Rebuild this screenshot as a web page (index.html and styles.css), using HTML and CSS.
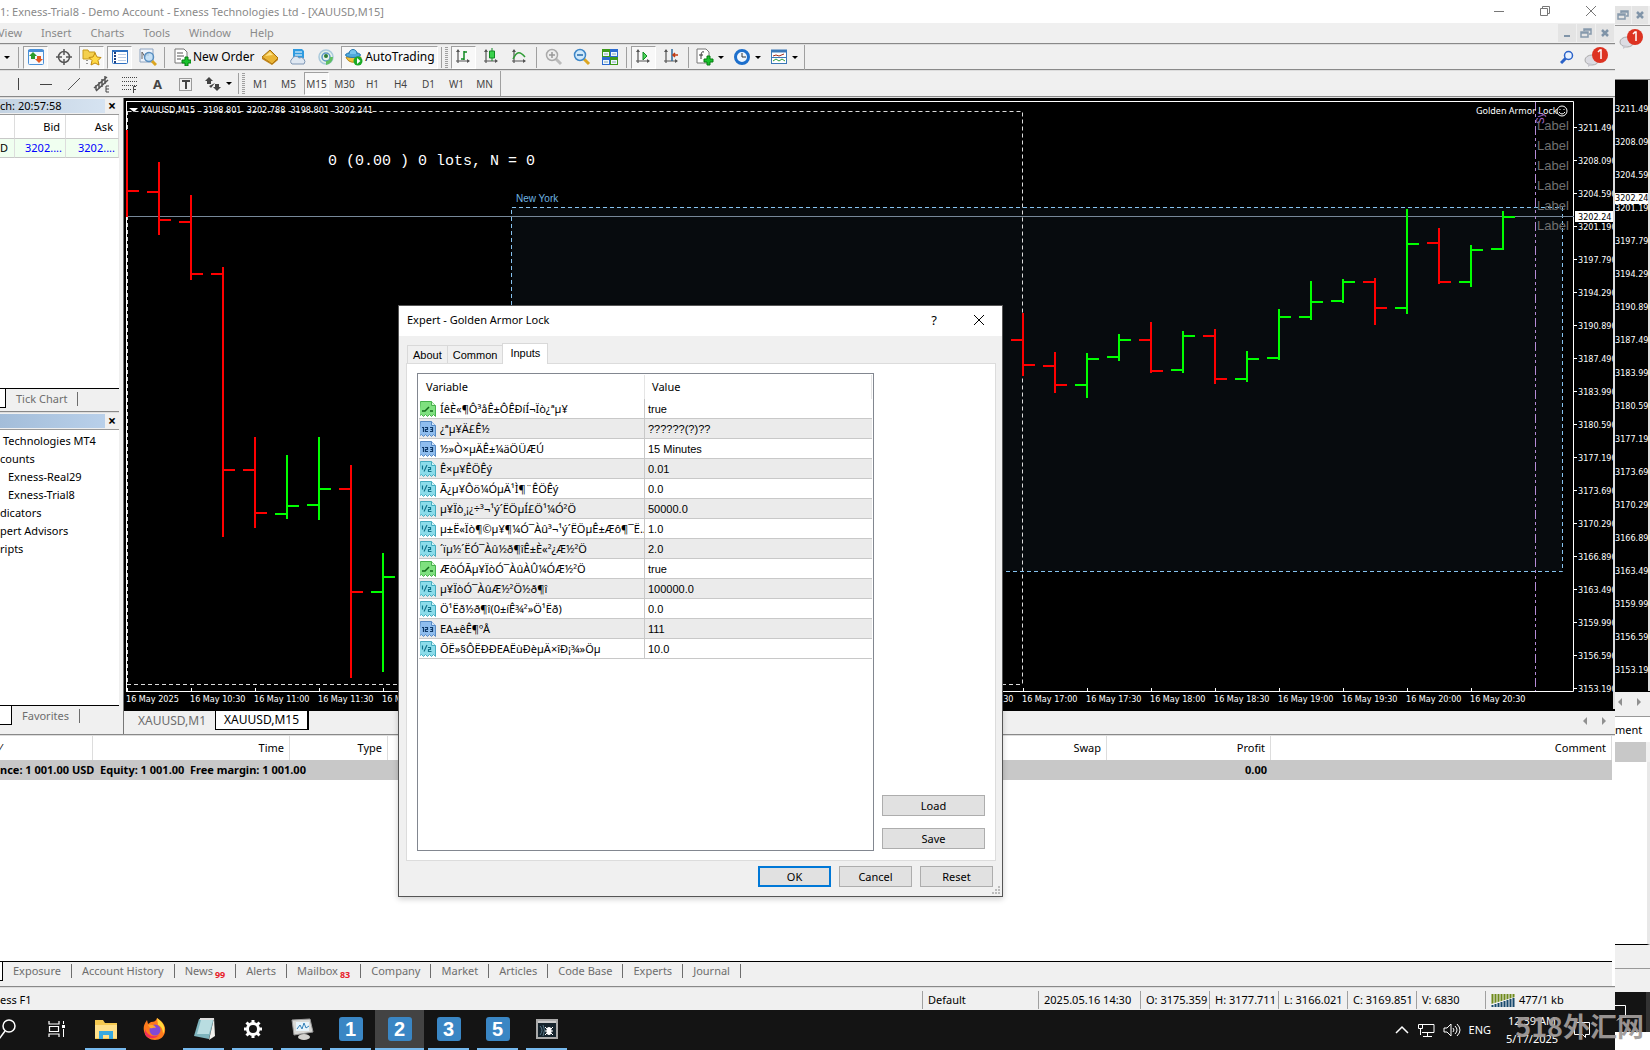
FILE: index.html
```html
<!DOCTYPE html>
<html lang="en">
<head>
<meta charset="utf-8">
<title>Exness-Trial8 - Demo Account - [XAUUSD,M15]</title>
<link rel="stylesheet" href="styles.css">
</head>
<body>
<svg class="defs" aria-hidden="true">
  <symbol id="i-bool" viewBox="0 0 16 16"><path d="M.5.5h11l4 4v11l-2-2-2 2-2-2-2 2-2-2-2 2-2-2-3 2z" fill="#7fe07f" stroke="#46b04c"/><path d="M11.500.5v4h4" fill="#d7f7d2" stroke="#46b04c"/><path d="M2 10h3l4-4M10 10h3" stroke="#12691b" stroke-width="1.500" fill="none"/></symbol>
  <symbol id="i-int" viewBox="0 0 16 16"><path d="M.5.5h11l4 4v11l-2-2-2 2-2-2-2 2-2-2-2 2-2-2-3 2z" fill="#8fbdee" stroke="#5589c4"/><path d="M11.500.5v4h4" fill="#d5e7fb" stroke="#5589c4"/><path d="M2 6.500h1.500V11M5 6.500h2.500v2h-2v2h2.500M10 6.500h2.500v4H10M10.500 8.500h2" stroke="#0f3968" stroke-width="1.200" fill="none"/></symbol>
  <symbol id="i-dbl" viewBox="0 0 16 16"><path d="M.5.5h11l4 4v11l-2-2-2 2-2-2-2 2-2-2-2 2-2-2-3 2z" fill="#8bdcea" stroke="#45acc0"/><path d="M11.500.5v4h4" fill="#d4f4f8" stroke="#45acc0"/><path d="M2.500 4.500v4M7 4l-3 6.500M8 6.500h2.500v2h-2v2h3" stroke="#11728a" stroke-width="1.200" fill="none"/></symbol>
  <symbol id="i-axes" viewBox="0 0 16 16"><path d="M3 2v13M1 13h13" stroke="#555" stroke-width="1.200"/><path d="M1 4l2-3 2 3zM12 11l3 2-3 2z" fill="#555"/></symbol>
  <symbol id="i-chat" viewBox="0 0 26 22"><ellipse cx="8" cy="14" rx="7" ry="5" fill="#dcdce2" stroke="#aaa"/><path d="M4 17v4l5-3" fill="#c8c8cf"/><circle cx="16" cy="9" r="8" fill="#dd3322"/><path d="M14 6l2-2h1v9" stroke="#fff" stroke-width="1.500" fill="none"/></symbol>
  <symbol id="i-restore" viewBox="0 0 12 12"><path d="M4 4V2h7v5H9M1 5h7v5H1zM1 6h7M4 3h7" fill="none" stroke="#8699ac" stroke-width="1.500"/></symbol>
  <symbol id="i-close" viewBox="0 0 12 12"><path d="M3 3l6 6M9 3l-6 6" stroke="#8094a8" stroke-width="2.500"/></symbol>
  <symbol id="i-arrows" viewBox="0 0 30 10"><path d="M7 1v8L3 5zM22 1v8l4-4z" fill="#909090"/></symbol>
</svg>
<div class="desktop">
  <div class="column">
    <main class="window">
      <header class="titlebar">
        <span>1: Exness-Trial8 - Demo Account - Exness Technologies Ltd - [XAUUSD,M15]</span>
        <div class="caption-buttons">
          <button aria-label="Minimize"><svg width="12" height="12"><path d="M1 6.500h10" stroke="#777"/></svg></button>
          <button aria-label="Restore"><svg width="12" height="12"><path d="M3.500 3V1.500h7v7H9M1.500 3.500h7v7h-7z" fill="none" stroke="#777"/></svg></button>
          <button aria-label="Close"><svg width="12" height="12"><path d="M1 1l10 10M11 1L1 11" stroke="#777"/></svg></button>
        </div>
      </header>
      <nav class="menubar">
        <div class="menus"><button>View</button><button>Insert</button><button>Charts</button><button>Tools</button><button>Window</button><button>Help</button></div>
        <div class="mdi-buttons">
          <button aria-label="Minimize chart"><svg width="12" height="12"><path d="M3 9h6" stroke="#8094a8" stroke-width="2"/></svg></button>
          <button aria-label="Restore chart"><svg width="12" height="12"><use href="#i-restore"/></svg></button>
          <button aria-label="Close chart"><svg width="12" height="12"><use href="#i-close"/></svg></button>
        </div>
      </nav>
      <div class="toolbar">
        <i class="caret first"></i><i class="sep"></i>
        <button class="tool on" aria-label="Market Watch"><svg width="18" height="18"><rect x="1.500" y="1.500" width="15" height="15" rx="1" fill="#f4f9ff" stroke="#4a90d8"/><path d="M1 3h16" stroke="#4a90d8" stroke-width="2"/><path d="M6 4l4 4H8v3H4V8H2z" fill="#2c9d2c"/><path d="M12 15l-4-4h2V8h4v3h2z" fill="#e25822"/></svg></button>
        <button class="tool" aria-label="Data Window"><svg width="18" height="18"><circle cx="9" cy="9" r="5.500" fill="none" stroke="#555" stroke-width="1.500"/><path d="M9 1v6M9 11v6M1 9h6M11 9h6" stroke="#555" stroke-width="1.500"/></svg></button>
        <button class="tool on" aria-label="Navigator"><svg width="20" height="18"><path d="M1 2h5l1 2h6v7H1z" fill="#f4d04e" stroke="#c79b1d"/><path d="M13 5l2 4 4 .5-3 3 1 4.500-4-2-4 2 1-4.500-3-3 4-.5z" fill="#ffd944" stroke="#c08a10"/><path d="M5 12v6" stroke="#333" stroke-dasharray="1 2"/></svg></button>
        <button class="tool on" aria-label="Terminal"><svg width="18" height="18"><rect x="1.500" y="2.500" width="15" height="13" rx="1" fill="#fff" stroke="#2c6fc0"/><path d="M1 3h16" stroke="#2c6fc0" stroke-width="2"/><path d="M4 4v11" stroke="#1b3f80" stroke-width="2" stroke-dasharray="2 1"/><path d="M7 6.500h8M7 9.500h8M7 12.500h8" stroke="#b9cce6"/></svg></button>
        <button class="tool" aria-label="Strategy Tester"><svg width="18" height="18"><path d="M1 1h13v13H1z" fill="#eef3fa" stroke="#8ea4c0"/><path d="M3 11V4l3 5 3-5v4" fill="none" stroke="#666"/><circle cx="10" cy="9" r="4.500" fill="#bcdcf5" fill-opacity=".8" stroke="#5a8fc0" stroke-width="1.500"/><path d="M13 13l4 4" stroke="#dba520" stroke-width="3"/></svg></button>
        <i class="sep"></i>
        <button class="tool wide"><svg width="18" height="18"><path d="M2 1h9l3 3v11H2z" fill="#fff" stroke="#777"/><path d="M4 5h6M4 8h7M4 11h4" stroke="#555"/><path d="M9 12h3V9h3v3h3v3h-3v3h-3v-3H9z" fill="#19c22c" stroke="#077d13"/></svg>New Order</button>
        <button class="tool" aria-label="MetaEditor"><svg width="18" height="18"><path d="M1 9l8-7 8 8-6 6z" fill="#eab535" stroke="#a46f0c"/><path d="M1 9l10 7 6-6v2l-6 5L1 11z" fill="#c18317"/><path d="M4 8l5-4 3 3z" fill="#ffe387"/></svg></button>
        <button class="tool" aria-label="Hosting"><svg width="18" height="18"><path d="M4 1h9l2 2v7H4z" fill="#2f9be0"/><path d="M6 4h7M6 7h7" stroke="#fff"/><path d="M3 16a3 3 0 010-5 4 4 0 017-1 4 4 0 015 6z" fill="#dfe8f2" stroke="#7f97b5"/></svg></button>
        <button class="tool" aria-label="Signals"><svg width="18" height="18"><circle cx="9" cy="9" r="7" fill="#e4f2e8" stroke="#a9c9dc" stroke-width="1.500"/><circle cx="9" cy="9" r="4" fill="none" stroke="#5e97c8" stroke-width="1.500"/><path d="M9 8v9a8 8 0 007-8l-3 0a4 4 0 01-4 4z" fill="#5fbf62"/><circle cx="9" cy="8" r="2" fill="#2c7d36"/></svg></button>
        <button class="tool auto on"><svg width="18" height="18"><path d="M1 9c2 7 13 7 15 0z" fill="#f0c23c" stroke="#b88616"/><ellipse cx="8" cy="7" rx="7.500" ry="2.500" fill="#4fa9dc" stroke="#2678b0"/><path d="M4 6c0-6 8-6 8 0" fill="#76c4ee" stroke="#2678b0"/><circle cx="13" cy="13" r="4.500" fill="#1aaa26"/><path d="M12 10l3.500 3-3.500 3z" fill="#fff"/></svg>AutoTrading</button>
        <i class="grip"></i>
        <button class="tool on" aria-label="Bar Chart"><svg width="18" height="18"><use href="#i-axes" width="16" height="16"/><path d="M9 3v9M9 4h3M6 11h3" stroke="#118a22" stroke-width="1.500"/></svg></button>
        <button class="tool" aria-label="Candlesticks"><svg width="18" height="18"><use href="#i-axes" width="16" height="16"/><path d="M9 0v13" stroke="#118a22"/><path d="M6.500 3h5v7h-5z" fill="#3ad24c" stroke="#118a22"/></svg></button>
        <button class="tool" aria-label="Line Chart"><svg width="18" height="18"><use href="#i-axes" width="16" height="16"/><path d="M2 11c4-8 7-8 12-2" stroke="#2f9c36" stroke-width="1.500" fill="none"/></svg></button>
        <i class="sep"></i>
        <button class="tool" aria-label="Zoom In"><svg width="18" height="18"><path d="M11 11l5 5" stroke="#bbb" stroke-width="3"/><circle cx="7" cy="7" r="5.500" fill="#eee" stroke="#aaa" stroke-width="1.500"/><path d="M4 7h6M7 4v6" stroke="#999" stroke-width="1.500"/></svg></button>
        <button class="tool" aria-label="Zoom Out"><svg width="18" height="18"><path d="M11 11l5 5" stroke="#dca621" stroke-width="3"/><circle cx="7" cy="7" r="5.500" fill="#cfe9fb" stroke="#3d86c8" stroke-width="1.500"/><path d="M4 7h6" stroke="#2568a8" stroke-width="1.500"/></svg></button>
        <button class="tool" aria-label="Tile Windows"><svg width="18" height="18"><path d="M1 1h8v8H1zM9 9h8v8H9z" fill="#3d9a1c"/><path d="M9 1h8v8H9zM1 9h8v8H1z" fill="#2b6bd0"/><path d="M2 4h6v4H2zM10 4h6v4h-6zM2 12h6v4H2zM10 12h6v4h-6z" fill="#eef6ff"/><path d="M3 6h4M11 6h4M3 14h4M11 14h4" stroke="#8aa"/></svg></button>
        <i class="sep"></i>
        <button class="tool on" aria-label="Auto Scroll"><svg width="18" height="18"><use href="#i-axes" width="16" height="16"/><path d="M8 4l4 4-4 4z" fill="#4bd65a" stroke="#118a22"/></svg></button>
        <button class="tool" aria-label="Chart Shift"><svg width="18" height="18"><use href="#i-axes" width="16" height="16"/><path d="M9 1v12" stroke="#2c6a9c" stroke-width="1.500"/><path d="M15 7h-5M12 5l-2 2 2 2" stroke="#c03a12" stroke-width="1.500" fill="none"/></svg></button>
        <i class="sep"></i>
        <button class="tool drop" aria-label="Indicators"><svg width="18" height="18"><path d="M1 1h9l3 3v11H1z" fill="#fff" stroke="#777"/><path d="M8 4c-3-1-3 2-3 7M3 7h4" stroke="#333" fill="none"/><path d="M8 11h3V8h3v3h3v3h-3v3h-3v-3H8z" fill="#19c22c" stroke="#077d13"/></svg><i class="caret"></i></button>
        <button class="tool drop" aria-label="Periodicity"><svg width="18" height="18"><circle cx="9" cy="9" r="6.500" fill="#eef6ff" stroke="#1d6fcc" stroke-width="3"/><path d="M9 5v4h4" stroke="#333" fill="none"/></svg><i class="caret"></i></button>
        <button class="tool drop" aria-label="Templates"><svg width="18" height="18"><rect x="1.500" y="2.500" width="15" height="13" fill="#fff" stroke="#3a78b8"/><path d="M1 3h16" stroke="#3a78b8" stroke-width="3"/><path d="M3 8l3-1 3 1 5-2" stroke="#a02c1c" fill="none"/><path d="M3 13l3-2 3 2 3-2 3 2" stroke="#2f9c36" fill="none"/><path d="M2 9.500h14" stroke="#3a78b8"/></svg><i class="caret"></i></button>
        <i class="edge"></i>
        <div class="right-tools"><svg width="14" height="14"><path d="M1 13l5-5" stroke="#2b62c8" stroke-width="3"/><circle cx="8.500" cy="5.500" r="4" fill="#e8f2ff" stroke="#2b62c8" stroke-width="1.500"/></svg><svg width="26" height="22"><use href="#i-chat"/></svg></div>
      </div>
      <div class="toolbar second">
        <button class="tool" aria-label="Vertical Line"><svg width="18" height="18"><path d="M9.500 3v12" stroke="#444"/></svg></button>
        <button class="tool" aria-label="Horizontal Line"><svg width="18" height="18"><path d="M3 9.500h12" stroke="#444"/></svg></button>
        <button class="tool" aria-label="Trendline"><svg width="18" height="18"><path d="M3 15L15 3" stroke="#555"/></svg></button>
        <button class="tool" aria-label="Channel"><svg width="18" height="18"><path d="M1 13L14 2M3 16L15 5M3 10v5M6 7v7M9 4v8M12 1v8" stroke="#555" stroke-width="1.500"/><path d="M16 11h-3v6h3M13 14h3" fill="none" stroke="#444"/></svg></button>
        <button class="tool" aria-label="Fibonacci"><svg width="18" height="18"><path d="M1 2.500h15M1 6.500h15M1 10.500h15M1 14.500h9" stroke="#444" stroke-dasharray="1 1"/><path d="M15 11.500h-2.500V18M12 14.500h3" fill="none" stroke="#444"/></svg></button>
        <button class="tool glyph">A</button>
        <button class="tool" aria-label="Text Label"><svg width="18" height="18"><path d="M2.500 3.500h12v12h-12z" fill="none" stroke="#444" stroke-dasharray="1 1"/><path d="M5 6h8M9 6v8" stroke="#444" stroke-width="2"/></svg></button>
        <button class="tool drop" aria-label="Arrows"><svg width="18" height="18"><path d="M5 2l4 4H7v3H3V6H1zM13 16l-4-4h2V9h4v3h2zM5 11l2 2 4-5" fill="#444"/></svg><i class="caret"></i></button>
        <i class="grip"></i>
        <button class="tool">M1</button><button class="tool">M5</button><button class="tool on">M15</button><button class="tool">M30</button><button class="tool">H1</button><button class="tool">H4</button><button class="tool">D1</button><button class="tool">W1</button><button class="tool">MN</button>
        <i class="edge"></i>
      </div>
      <div class="work">
        <aside class="side">
          <section class="panel watch">
            <h2 class="cap pale"><span>ch: 20:57:58</span><button aria-label="Close Market Watch">×</button></h2>
            <table class="quotes">
              <thead><tr><th></th><th>Bid</th><th>Ask</th></tr></thead>
              <tbody><tr><td>D</td><td>3202....</td><td>3202....</td></tr></tbody>
            </table>
            <div class="grow"></div>
            <div class="tabs"><i class="tab-cut"></i><button>Tick Chart</button></div>
          </section>
          <section class="panel nav">
            <h2 class="cap"><span></span><button aria-label="Close Navigator">×</button></h2>
            <ul class="tree"><li class="in">Technologies MT4</li><li>counts</li><li class="deep">Exness-Real29</li><li class="deep">Exness-Trial8</li><li>dicators</li><li>pert Advisors</li><li>ripts</li></ul>
            <div class="tabs wide-cut"><i class="tab-cut"></i><button>Favorites</button></div>
          </section>
        </aside>
        <section class="charts">
          <svg class="chart" role="img" aria-label="XAUUSD M15 bar chart">
            <g transform="translate(-124,-98)">
              <rect x="511" y="207" width="1051" height="364" fill="#070b0e"/>
              <path d="M126 101.500H1573.500V691.500H126M126.500 101v591" fill="none" stroke="#fff"/>
              <path d="M127.500 111.500H1022.500V684M127 684.500H1022M127.500 111v573" fill="none" stroke="#ddd" stroke-dasharray="4 3"/>
              <path d="M511.500 571V207.500H1562.500V571.500H511" fill="none" stroke="#87c3f0" stroke-dasharray="4 3"/>
              <path d="M127 216.500H1574" stroke="#778899"/>
              <path d="M1535.500 102V691" stroke="#b58bd6" stroke-dasharray="9 3 3 3 3 3"/>
              <path class="bar down" d="M127 130V217M127 191h12M159 162V235M147 192h12M159 220h12M191 195V280M179 222h12M191 274h12M223 267V537M211 274h12M223 470h12M255 437V528M243 470h12M255 513h12M351 465V678M339 489h12M351 592h12M1023 313V376M1011 340h12M1023 365h12M1055 352V393M1043 366h12M1055 385h12M1151 322V373M1139 340h12M1151 371h12M1215 329V384M1203 336h12M1215 379h12M1375 278V325M1363 282h12M1375 308h12M1439 228V284M1427 243h12M1439 282h12"/>
              <path class="bar up" d="M287 455V519M275 514h12M287 506h12M319 437V520M307 505h12M319 489h12M383 553V672M371 592h12M383 577h12M1087 353V398M1075 385h12M1087 359h12M1119 334V361M1107 357h12M1119 340h12M1183 331V373M1171 370h12M1183 336h12M1247 351V382M1235 379h12M1247 359h12M1279 309V360M1267 358h12M1279 317h12M1311 281V320M1299 317h12M1311 302h12M1343 279V303M1331 301h12M1343 282h12M1407 209V314M1395 308h12M1407 244h12M1471 245V287M1459 282h12M1471 250h12M1503 211V250M1491 249h12M1503 217h12"/>
              <path d="M1574 127.500h3M1574 160.500h3M1574 193.500h3M1574 226.500h3M1574 259.500h3M1574 292.500h3M1574 325.500h3M1574 358.500h3M1574 391.500h3M1574 424.500h3M1574 457.500h3M1574 490.500h3M1574 523.500h3M1574 556.500h3M1574 589.500h3M1574 622.500h3M1574 655.500h3M1574 688.500h3M127.500 688v4M191.500 688v4M255.500 688v4M319.500 688v4M383.500 688v4M1023.500 688v4M1087.500 688v4M1151.500 688v4M1215.500 688v4M1279.500 688v4M1343.500 688v4M1407.500 688v4M1471.500 688v4" stroke="#fff"/>
              <path d="M129 108h9l-4 4z" fill="#fff"/>
              <g class="axis">
                <text x="141" y="113" xml:space="preserve">XAUUSD,M15   3198.801  3202.788  3198.801  3202.241</text>
                <text x="1578" y="131">3211.490</text><text x="1578" y="164">3208.090</text><text x="1578" y="197">3204.590</text><text x="1578" y="230">3201.190</text><text x="1578" y="263">3197.790</text><text x="1578" y="296">3194.290</text><text x="1578" y="329">3190.890</text><text x="1578" y="362">3187.490</text><text x="1578" y="395">3183.990</text><text x="1578" y="428">3180.590</text><text x="1578" y="461">3177.190</text><text x="1578" y="494">3173.690</text><text x="1578" y="527">3170.290</text><text x="1578" y="560">3166.890</text><text x="1578" y="593">3163.490</text><text x="1578" y="626">3159.990</text><text x="1578" y="659">3156.590</text><text x="1578" y="692">3153.190</text>
                <text x="126" y="702">16 May 2025</text><text x="190" y="702">16 May 10:30</text><text x="254" y="702">16 May 11:00</text><text x="318" y="702">16 May 11:30</text><text x="382" y="702">16 May 12:00</text><text x="958" y="702">16 May 16:30</text><text x="1022" y="702">16 May 17:00</text><text x="1086" y="702">16 May 17:30</text><text x="1150" y="702">16 May 18:00</text><text x="1214" y="702">16 May 18:30</text><text x="1278" y="702">16 May 19:00</text><text x="1342" y="702">16 May 19:30</text><text x="1406" y="702">16 May 20:00</text><text x="1470" y="702">16 May 20:30</text>
              </g>
              <path d="M1575 211h38v11h-38z" fill="#fff"/><text class="price" x="1578" y="220">3202.24</text>
              <text class="comment" x="328" y="165">0 (0.00 ) 0 lots, N = 0</text>
              <text class="session" x="516" y="202">New York</text>
              <text class="expert" x="1476" y="114">Golden Armor Lock</text>
              <circle cx="1562" cy="111" r="5" fill="none" stroke="#fff"/><path d="M1559 112q3 4 6 0M1560 109v1M1564 109v1" fill="none" stroke="#fff"/>
              <text class="sy" transform="translate(1544,124) rotate(-90)">Sy</text>
              <g class="labels"><text x="1537" y="130">Label</text><text x="1537" y="150">Label</text><text x="1537" y="170">Label</text><text x="1537" y="190">Label</text><text x="1537" y="210">Label</text><text x="1537" y="230">Label</text></g>
            </g>
          </svg>
          <div class="chart-tabs"><button>XAUUSD,M1</button><button class="active">XAUUSD,M15</button><svg width="30" height="10"><use href="#i-arrows"/></svg></div>
        </section>
      </div>
      <section class="terminal">
        <table class="trades">
          <colgroup><col class="c-order"><col class="c-time"><col class="c-type"><col class="c-swap"><col class="c-profit"><col></colgroup>
          <thead><tr><th>⁄</th><th>Time</th><th>Type</th><th>Swap</th><th>Profit</th><th>Comment</th></tr></thead>
          <tbody><tr><td colspan="4">nce: 1 001.00 USD&nbsp; Equity: 1 001.00&nbsp; Free margin: 1 001.00</td><td>0.00</td><td></td></tr></tbody>
        </table>
        <div class="grow"></div>
        <div class="tabs bottom"><i class="tab-cut"></i><button>Exposure</button><button>Account History</button><button>News<sub>99</sub></button><button>Alerts</button><button>Mailbox<sub>83</sub></button><button>Company</button><button>Market</button><button>Articles</button><button>Code Base</button><button>Experts</button><button>Journal</button></div>
      </section>
      <footer class="status">
        <span class="help">ess F1</span><span class="s-profile">Default</span><span class="s-date">2025.05.16 14:30</span><span class="s-val">O: 3175.359</span><span class="s-val">H: 3177.711</span><span class="s-val">L: 3166.021</span><span class="s-val">C: 3169.851</span><span class="s-val">V: 6830</span>
        <span class="s-net"><svg width="24" height="13"><path d="M1.500 0v13M4.500 0v13M7.500 0v13M10.500 0v13M13.500 0v13M16.500 0v13M19.500 0v13M22.500 0v13" stroke="#6f8a1a" stroke-width="2"/><path d="M0 10L24 3V13H0z" fill="#efefef"/><path d="M1.500 11v2M4.500 10v3M7.500 9v4M10.500 8v5M13.500 7v6M16.500 6v7M19.500 5v8M22.500 4v9" stroke="#17496d" stroke-width="2"/></svg>477/1 kb</span>
      </footer>
    </main>
    <nav class="taskbar">
      <button class="task cut" aria-label="Search"><svg width="18" height="24"><circle cx="9" cy="9" r="6" fill="none" stroke="#fff" stroke-width="1.500"/><path d="M5 14l-6 8" stroke="#fff" stroke-width="1.500"/></svg></button>
      <button class="task" aria-label="Task View"><svg width="20" height="18"><path d="M2 1v3h10V1M2 17v-3h10v3M2.500 6.500h9v5h-9z" fill="none" stroke="#fff" stroke-width="1.200"/><path d="M16.500 1v3M16.500 9v8" stroke="#fff"/><path d="M15 5h3v3h-3z" fill="#fff"/></svg></button>
      <button class="task run" aria-label="File Explorer"><svg width="24" height="22"><path d="M1 2h8l2 3h12v16H1z" fill="#f5c951"/><path d="M1 7h22v13H1z" fill="#ffe08a"/><path d="M5 21v-8h14v8h-4v-4H9v4z" fill="#36a9e1"/></svg></button>
      <button class="task" aria-label="Firefox"><svg width="24" height="24"><path d="M14 1c6 4 9 8 8 14-1 5-5 8-10 8S2 20 1 14C0 9 2 6 4 3l1 4 3-2c3 0 5-1 6-4z" fill="#ff7a1c"/><path d="M14 1c7 5 9 10 6 16 0-5-2-8-5-9z" fill="#ffd93b"/><circle cx="12" cy="13" r="5.500" fill="#8149d6"/><path d="M2 12c2 6 8 9 14 6-3 4-12 5-14-1z" fill="#f32f5b"/><path d="M5 8c4-1 7 0 8 3-3-1-4 1-6 0z" fill="#ffa72d"/></svg></button>
      <button class="task run" aria-label="Notepad"><svg width="24" height="24"><path d="M7 2l15-1-5 21-15-3z" fill="#7eb4bd"/><path d="M9 3h12l-4 14H5z" fill="#b9dde1"/><path d="M22 1l1 18-6 4z" fill="#f0f0ec"/><path d="M8 2h14" stroke="#ddd" stroke-width="2"/></svg></button>
      <button class="task run" aria-label="Settings"><svg width="22" height="22"><circle cx="11" cy="11" r="5.500" fill="none" stroke="#fff" stroke-width="3"/><path d="M11 2v3M11 17v3M2 11h3M17 11h3M4.500 4.500l2 2M15.500 15.500l2 2M17.500 4.500l-2 2M6.500 15.500l-2 2" stroke="#fff" stroke-width="3"/></svg></button>
      <button class="task run" aria-label="Monitor"><svg width="24" height="24"><path d="M2 3l18-1 3 13-19 3z" fill="#d9d9d6" stroke="#999"/><path d="M6 5h13v9H6z" fill="#e8f4fb"/><path d="M7 12l3-4 2 4 2-6 2 5 3-2" fill="none" stroke="#3280b8"/><ellipse cx="14" cy="20" rx="6" ry="3" fill="#d2d2cf"/></svg></button>
      <button class="task run"><b>1</b></button>
      <button class="task run active"><b>2</b></button>
      <button class="task run"><b>3</b></button>
      <button class="task run"><b>5</b></button>
      <button class="task run" aria-label="Debugger"><svg width="22" height="20"><path d="M1 1h20v18H1z" fill="#16242d" stroke="#aaa" stroke-width="2"/><path d="M2 3h18" stroke="#ccc" stroke-width="2"/><ellipse cx="13" cy="12" rx="2.500" ry="4" fill="#fff"/><path d="M9 8l2 2M9 12h8M9 16l2-2M17 8l-2 2M17 16l-2-2" stroke="#fff"/><path d="M4 7q4 4 0 9M7 6q3 5 0 11" stroke="#578" fill="none"/></svg></button>
      <div class="tray">
        <svg width="14" height="10"><path d="M1 8l6-6 6 6" fill="none" stroke="#fff" stroke-width="1.500"/></svg>
        <svg width="18" height="16"><path d="M5 2.500h12v8H5M10.500 11v3M6 14.500h9M1.500 2.500h4v4h-4zM3.500 7v6" fill="none" stroke="#fff"/></svg>
        <svg width="18" height="16"><path d="M1 6h3l4-4v12l-4-4H1z" fill="none" stroke="#fff"/><path d="M10 6q2 2 0 4M12 4q4 4 0 8M14 2q6 6 0 12" fill="none" stroke="#fff"/></svg>
        <span>ENG</span>
        <time>12:39 AM<br>5/17/2025</time>
        <svg width="18" height="18"><path d="M1.500 1.500h15v12h-4v3l-3-3h-8z" fill="none" stroke="#fff"/></svg>
      </div>
    </nav>
  </div>
  <aside class="behind">
    <div class="b-menu"><button aria-label="Restore"><svg width="12" height="12"><use href="#i-restore"/></svg></button><button aria-label="Close"><svg width="12" height="12"><use href="#i-close"/></svg></button></div>
    <div class="b-tools"><svg width="26" height="22"><use href="#i-chat"/></svg></div>
    <ol class="b-prices"><li>3211.490</li><li>3208.090</li><li>3204.590</li><li>3201.190</li><li>3197.790</li><li>3194.290</li><li>3190.890</li><li>3187.490</li><li>3183.990</li><li>3180.590</li><li>3177.190</li><li>3173.690</li><li>3170.290</li><li>3166.890</li><li>3163.490</li><li>3159.990</li><li>3156.590</li><li>3153.190</li><li class="now">3202.24</li></ol>
    <div class="b-tabs"><svg width="30" height="10"><use href="#i-arrows"/></svg></div>
    <div class="b-head">ment</div>
    <div class="b-row"></div>
    <div class="b-space"></div>
    <div class="b-foot"></div>
    <div class="b-status"></div>
    <div class="b-task"><svg width="12" height="18"><path d="M0 1.500h10.500v12H5l-3 3" fill="none" stroke="#fff"/></svg></div>
    <div class="b-end"></div>
  </aside>
  <div class="watermark">518外汇网</div>

  <form class="dialog" role="dialog" aria-labelledby="dlg-title" onsubmit="return false">
    <header class="dlg-title"><span id="dlg-title">Expert - Golden Armor Lock</span><button type="button" aria-label="Help">?</button><button type="button" aria-label="Close"><svg width="12" height="12"><path d="M1 1l10 10M11 1L1 11" stroke="#000"/></svg></button></header>
    <div class="dlg-tabs"><button type="button">About</button><button type="button">Common</button><button type="button" class="active">Inputs</button></div>
    <div class="pane">
      <div class="list">
        <table class="inputs">
          <colgroup><col class="c-var"><col></colgroup>
          <thead><tr><th>Variable</th><th>Value</th></tr></thead>
          <tbody>
            <tr><td><svg width="16" height="16"><use href="#i-bool"/></svg>ÍêÈ«¶Ô³åÊ±ÔÊÐíÍ¬Ïò¿ªµ¥</td><td>true</td></tr>
            <tr><td><svg width="16" height="16"><use href="#i-int"/></svg>¿ªµ¥Ä£Ê½</td><td>??????(?)??</td></tr>
            <tr><td><svg width="16" height="16"><use href="#i-int"/></svg>½»Ò×µÄÊ±¼äÖÜÆÚ</td><td>15 Minutes</td></tr>
            <tr><td><svg width="16" height="16"><use href="#i-dbl"/></svg>Ê×µ¥ÊÖÊý</td><td>0.01</td></tr>
            <tr><td><svg width="16" height="16"><use href="#i-dbl"/></svg>Ã¿µ¥Ôö¼ÓµÄ¹Ì¶¨ÊÖÊý</td><td>0.0</td></tr>
            <tr><td><svg width="16" height="16"><use href="#i-dbl"/></svg>µ¥Ïò¸¡¿÷³¬¹ý´ËÖµÍ£Ö¹¼Ó²Ö</td><td>50000.0</td></tr>
            <tr><td><svg width="16" height="16"><use href="#i-dbl"/></svg>µ±Ë«Ïò¶©µ¥¶¼Ó¯Àû³¬¹ý´ËÖµÊ±Æô¶¯Ë...</td><td>1.0</td></tr>
            <tr><td><svg width="16" height="16"><use href="#i-dbl"/></svg>´ïµ½´ËÓ¯Àû½ð¶îÊ±È«²¿Æ½²Ö</td><td>2.0</td></tr>
            <tr><td><svg width="16" height="16"><use href="#i-bool"/></svg>ÆôÓÃµ¥ÏòÓ¯ÀûÀÛ¼ÓÆ½²Ö</td><td>true</td></tr>
            <tr><td><svg width="16" height="16"><use href="#i-dbl"/></svg>µ¥ÏòÓ¯ÀûÆ½²Ö½ð¶î</td><td>100000.0</td></tr>
            <tr><td><svg width="16" height="16"><use href="#i-dbl"/></svg>Ö¹Ëð½ð¶î(0±íÊ¾²»Ö¹Ëð)</td><td>0.0</td></tr>
            <tr><td><svg width="16" height="16"><use href="#i-int"/></svg>EA±êÊ¶ºÅ</td><td>111</td></tr>
            <tr><td><svg width="16" height="16"><use href="#i-dbl"/></svg>ÕË»§ÔËÐÐEAËùÐèµÄ×îÐ¡¾»Öµ</td><td>10.0</td></tr>
          </tbody>
        </table>
      </div>
      <div class="pane-actions"><button type="button" class="push">Load</button><button type="button" class="push">Save</button></div>
    </div>
    <div class="dlg-actions"><button type="submit" class="push default">OK</button><button type="button" class="push">Cancel</button><button type="reset" class="push">Reset</button></div>
    <svg class="size-grip" width="8" height="8"><path d="M6 0h2v2H6zM3 3h2v2H3zM6 3h2v2H6zM0 6h2v2H0zM3 6h2v2H3zM6 6h2v2H6z" fill="#bbb"/></svg>
  </form>
</div>
</body>
</html>
```
FILE: styles.css
```css
* { box-sizing: border-box; }
body { margin: 0; font: 11px/16px "Noto Sans", sans-serif; color: #000; background: #fff; }
button { font: inherit; color: inherit; border: 0; background: none; padding: 0; margin: 0; white-space: nowrap; }
svg { display: block; flex: none; }
table { border-collapse: separate; border-spacing: 0; table-layout: fixed; width: 100%; }
th { font-weight: 400; }
.defs { position: absolute; width: 0; height: 0; }
.grow { flex: 1; }

.desktop { position: relative; display: grid; grid-template-columns: minmax(0, 1fr) 35px; height: 100vh; overflow: hidden; }
.column { display: flex; flex-direction: column; min-height: 0; }
.window { flex: 1; min-height: 0; display: flex; flex-direction: column; background: #f0f0f0; }

/* Title bar and menu */
.titlebar { height: 23px; background: #fff; color: #8a8a8a; display: flex; justify-content: space-between; align-items: center; white-space: nowrap; }
.caption-buttons { display: flex; gap: 34px; padding: 0 18px 2px 0; }
.menubar { height: 22px; display: flex; justify-content: space-between; color: #8a8a8a; border-bottom: 2px groove #ddd; }
.menus { display: flex; gap: 19px; margin-left: -2px; }
.mdi-buttons { display: flex; gap: 1px; padding: 1px 1px 0 0; }
.mdi-buttons button, .b-menu button { width: 18px; height: 18px; background: #e4e4e4; display: grid; place-items: center; }

/* Toolbars */
.toolbar { height: 26px; flex: none; display: flex; align-items: center; gap: 3px; border-bottom: 2px groove #ddd; font-size: 12px; }
.tool { height: 23px; min-width: 25px; display: flex; align-items: center; justify-content: center; }
.tool.on { background: #f8f8f8; border: 1px solid; border-color: #a0a0a0 #fff #fff #a0a0a0; }
.tool.wide { gap: 2px; padding: 0 0 0 4px; }
.tool.auto { gap: 2px; width: 97px; }
.tool.drop { width: 34px; gap: 4px; justify-content: flex-start; padding-left: 3px; }
.caret { width: 0; height: 0; border: 3px solid transparent; border-top-color: #000; border-bottom: 0; }
.caret.first { margin: 0 4px 0 4px; }
.sep { width: 1px; height: 21px; margin: 0 1px; background: #a0a0a0; }
.grip { width: 7px; height: 21px; border-left: 1px solid #a0a0a0; background: repeating-linear-gradient(#a0a0a0 0 1px, transparent 1px 2px) 3px 0 / 3px 100% no-repeat; }
.edge { width: 1px; height: 25px; background: #a0a0a0; }
.right-tools { margin-left: auto; display: flex; align-items: center; gap: 10px; padding-right: 5px; }
.toolbar.second { height: 27px; padding-left: 5px; font-size: 10px; color: #444; }
.glyph { font-size: 13px; font-weight: 700; }

/* Left panels */
.work { flex: 1; min-height: 0; display: grid; grid-template-columns: 119px minmax(0, 1fr); column-gap: 4px; }
.side { display: flex; flex-direction: column; min-height: 0; overflow: hidden; padding-bottom: 6px; }
.panel { display: flex; flex-direction: column; background: #fff; min-height: 0; }
.watch { height: 315px; border-bottom: 2px groove #ddd; }
.nav { flex: 1; }
.cap { margin: 0; height: 17px; display: flex; align-items: center; background: #f0f0f0; border-bottom: 1px solid #999; font-size: 11px; font-weight: 400; }
.cap span { flex: 1; height: 14px; line-height: 14px; background: linear-gradient(90deg, #a3bdd9, #b9d0ea); }
.cap.pale span { background: linear-gradient(90deg, #c4d3e2, #d6e3f1); }
.cap button { width: 14px; font-size: 14px; font-weight: 700; line-height: 12px; }
.quotes th, .quotes td { text-align: right; padding: 0 5px 0 0; border-right: 1px solid #ddd; border-bottom: 1px solid #c8c8c8; white-space: nowrap; overflow: hidden; }
.quotes th { height: 24px; }
.quotes td { height: 19px; background: #f0fff0; color: #00f; padding-right: 3px; }
.quotes th:first-child { width: 15px; }
.quotes td:first-child { color: #000; padding: 0; text-align: left; }
.quotes th:nth-child(2) { width: 51px; }
.tabs { height: 23px; flex: none; display: flex; align-items: flex-start; background: #f0f0f0; border-top: 1px solid #000; color: #6d6d6d; overflow: hidden; }
.tabs button { height: 14px; margin-top: 3px; padding: 0 10px; line-height: 14px; border-right: 1px solid #6d6d6d; }
.tab-cut { width: 6px; height: 20px; margin-top: -1px; background: #fff; border: solid #000; border-width: 0 1px 1px 0; }
.wide-cut .tab-cut { width: 12px; }
.bottom .tab-cut { width: 3px; }
.tabs sub { color: #e8202a; font-size: 9px; font-weight: 700; line-height: 0; margin-left: 2px; }
.tree { list-style: none; margin: 0; padding: 2px 0 0; flex: 1; }
.tree li { height: 18px; line-height: 18px; white-space: nowrap; }
.tree .in { padding-left: 3px; }
.tree .deep { padding-left: 8px; }

/* Chart */
.charts { display: flex; flex-direction: column; min-height: 0; min-width: 0; border-left: 1px solid #777; }
.chart { flex: 1; width: 100%; min-height: 0; background: #000; border-right: 2px solid #ddd; }
.bar { fill: none; stroke-width: 2; }
.down { stroke: #f00; }
.up { stroke: #0f0; }
.axis, .price { font: 9px "DejaVu Sans Condensed", "DejaVu Sans", sans-serif; fill: #fff; }
.price { fill: #000; }
.comment { font: 15px "Liberation Mono", monospace; fill: #fff; }
.session { font: 10px "Liberation Sans", sans-serif; fill: #6fb4e0; }
.expert { font: 9px "Noto Sans", sans-serif; fill: #fff; }
.sy { font: 10px "Liberation Sans", sans-serif; fill: #a66bd0; }
.labels { font: 13px "Liberation Sans", sans-serif; fill: #707070; }
.chart-tabs { height: 25px; flex: none; display: flex; align-items: flex-start; border-top: 2px solid #000; color: #6d6d6d; font-size: 12px; }
.chart-tabs button { height: 19px; padding: 0 9px 0 14px; }
.chart-tabs .active { background: #fff; color: #000; border: solid #000; border-width: 0 2px 1px 1px; padding: 0 8px; }
.chart-tabs svg { margin: 5px 5px 0 auto; }

/* Terminal */
.terminal { height: 254px; flex: none; display: flex; flex-direction: column; background: #fff; border-top: 2px groove #ddd; border-bottom: 2px groove #ddd; padding-right: 3px; }
.trades th { height: 24px; text-align: right; padding: 0 5px; border-right: 1px solid #ddd; }
.trades th:first-child { text-align: left; padding: 0; }
.trades td { height: 20px; background: #c8c8c8; font-weight: 700; text-align: right; padding: 0 4px; }
.trades td:first-child { text-align: left; padding: 0; white-space: pre; }
.c-order { width: 93px; } .c-time { width: 197px; } .c-type { width: 98px; } .c-swap { width: 719px; } .c-profit { width: 164px; }
.tabs.bottom { height: 25px; }
.tabs.bottom button { margin-top: 2px; }
.status { height: 22px; flex: none; display: flex; align-items: flex-end; padding-bottom: 1px; white-space: nowrap; }
.status span { height: 18px; line-height: 18px; padding-left: 5px; border-left: 1px solid #a0a0a0; }
.status .help { flex: 1; padding: 0; border: 0; }
.s-profile { width: 116px; } .s-date { width: 102px; } .s-val { width: 69px; }
.status .s-net { width: 130px; display: flex; align-items: center; gap: 4px; }

/* Taskbar */
.taskbar { height: 40px; flex: none; display: flex; background: #141414; color: #fff; }
.task { width: 41px; margin-right: 8px; display: grid; place-items: center; border-bottom: 2px solid transparent; }
.task.cut { width: 28px; justify-items: start; }
.task.run { border-bottom-color: #76b9ed; }
.task.active { width: 49px; margin: 0 4px 0 -4px; background: #434343; }
.task b { width: 24px; height: 24px; border-radius: 3px; background: #3a86c4; font: 700 20px/24px "Liberation Sans", sans-serif; }
.tray { margin-left: auto; display: flex; align-items: center; gap: 8px; padding-right: 24px; }
.tray time { width: 66px; text-align: center; line-height: 18px; }

/* Edge of the window behind */
.behind { display: flex; flex-direction: column; min-height: 0; overflow: hidden; background: #f0f0f0; }
.behind > * { flex: none; }
.b-menu { height: 26px; padding-top: 6px; display: flex; gap: 1px; border-bottom: 1px solid #999; background: linear-gradient(#fff 6px, #f0f0f0 6px); }
.b-menu button { width: 16px; }
.b-tools { height: 54px; padding: 2px 0 0 4px; border-bottom: 1px solid #888; }
.b-prices { position: relative; list-style: none; margin: 0; padding: 13px 0 0; height: 611px; background: #000; color: #fff; font: 9px/33px "DejaVu Sans Condensed", sans-serif; overflow: hidden; border-right: 2px solid #ddd; }
.b-prices li { height: 33px; }
.b-prices .now { position: absolute; top: 113px; left: 0; width: 33px; height: 11px; line-height: 11px; background: #fff; color: #000; }
.b-tabs { height: 26px; border-top: 1px solid #000; padding-top: 5px; border-bottom: 1px solid #999; }
.b-head { height: 25px; background: #fff; line-height: 25px; }
.b-row { height: 20px; background: #c8c8c8; width: 31px; }
.behind .b-space { flex: 1; background: #fff; border: solid; border-color: #ddd #e8e8e8 #000; border-width: 0 3px 1px 0; }
.b-foot { height: 24px; border-bottom: 1px solid #999; }
.b-status { height: 23px; }
.b-task { height: 40px; background: #141414; padding-top: 12px; border-right: 4px solid #333; }
.b-end { height: 18px; background: #fff; }

.watermark { position: absolute; right: 6px; bottom: 7px; font: 700 27px/34px "Noto Sans CJK SC", sans-serif; color: #a09a98; opacity: .95; }

/* Expert properties dialog */
.dialog { position: absolute; left: 398px; top: 305px; width: 605px; height: 592px; display: flex; flex-direction: column; background: #f0f0f0; border: 1px solid #555; box-shadow: 0 2px 6px rgba(0, 0, 0, .2); }
.dlg-title { height: 30px; flex: none; display: flex; align-items: center; background: #fff; padding: 0 17px 2px 0; }
.dlg-title span { flex: 1; padding-left: 8px; }
.dlg-title button { width: 12px; margin-left: 33px; font-size: 13px; }
.dlg-tabs { height: 27px; padding: 0 0 0 8px; flex: none; display: flex; align-items: flex-end; font-family: "Liberation Sans", sans-serif; }
.dlg-tabs button { height: 18px; padding: 0 5px; border: solid #d9d9d9; border-width: 1px 0 0 1px; }
.dlg-tabs .active { position: relative; height: 21px; padding: 0 7px 3px; margin-bottom: -1px; background: #fff; border-right-width: 1px; }
.pane { flex: 1; min-height: 0; display: flex; gap: 8px; margin: 0 6px 0 7px; padding: 9px 10px 9px 10px; background: #fff; border: 1px solid #dcdcdc; }
.list { flex: 1; border: 1px solid #828790; padding: 1px; min-width: 0; overflow: hidden; }
.c-var { width: 226px; }
.inputs th { height: 24px; padding: 0 7px; text-align: left; border-right: 1px solid #e5e5e5; }
.inputs td { height: 20px; padding: 0 3px; border-bottom: 1px solid #c8c8c8; white-space: nowrap; line-height: 18px; overflow: hidden; font-family: "Liberation Sans", sans-serif; }
.inputs td:first-child { border-right: 1px solid #c8c8c8; padding: 0 0 0 1px; font-family: "Noto Sans", sans-serif; }
.inputs td svg { float: left; margin: 1px 4px 0 0; }
.inputs tbody tr:nth-child(even) { background: #ebebeb; }
.pane-actions { display: flex; flex-direction: column; justify-content: flex-end; gap: 12px; width: 103px; padding-bottom: 2px; }
.push { height: 21px; background: #e1e1e1; border: 1px solid #adadad; }
.push.default { border: 2px solid #0078d7; }
.dlg-actions { display: flex; justify-content: flex-end; gap: 8px; padding: 5px 9px 9px; }
.dlg-actions .push { width: 73px; }
.size-grip { position: absolute; right: 2px; bottom: 2px; }
```
